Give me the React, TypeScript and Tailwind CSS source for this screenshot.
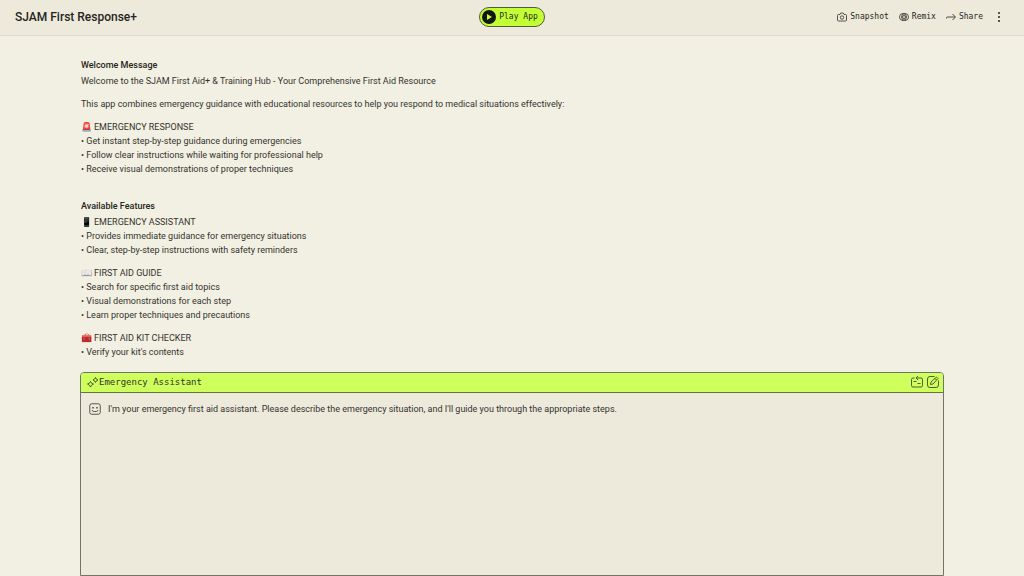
import type { ReactNode } from "react";

interface Block {
  icon?: string;
  lines: string[];
}

interface SectionProps {
  title: string;
  blocks: Block[];
}

const welcome: Block[] = [
  { lines: ["Welcome to the SJAM First Aid+ & Training Hub - Your Comprehensive First Aid Resource"] },
  {
    lines: [
      "This app combines emergency guidance with educational resources to help you respond to medical situations effectively:",
    ],
  },
  {
    icon: "🚨",
    lines: [
      "EMERGENCY RESPONSE",
      "• Get instant step-by-step guidance during emergencies",
      "• Follow clear instructions while waiting for professional help",
      "• Receive visual demonstrations of proper techniques",
    ],
  },
];

const features: Block[] = [
  {
    icon: "📱",
    lines: [
      "EMERGENCY ASSISTANT",
      "• Provides immediate guidance for emergency situations",
      "• Clear, step-by-step instructions with safety reminders",
    ],
  },
  {
    icon: "📖",
    lines: [
      "FIRST AID GUIDE",
      "• Search for specific first aid topics",
      "• Visual demonstrations for each step",
      "• Learn proper techniques and precautions",
    ],
  },
  {
    icon: "🧰",
    lines: ["FIRST AID KIT CHECKER", "• Verify your kit's contents"],
  },
];

function Section({ title, blocks }: SectionProps) {
  return (
    <section>
      <h2 className="mb-[2px] font-medium">{title}</h2>
      <div className="flex flex-col gap-[9px] text-[#33332d]">
        {blocks.map((block) => (
          <div key={block.lines[0]}>
            {block.lines.map((line, i) => (
              <p key={line} className="flex items-center">
                {i === 0 && block.icon && (
                  <span className="w-[13px] shrink-0 font-['Noto_Color_Emoji',sans-serif] text-[9px]">{block.icon}</span>
                )}
                {line}
              </p>
            ))}
          </div>
        ))}
      </div>
    </section>
  );
}

function ToolButton({ label, children }: { label: string; children: ReactNode }) {
  return (
    <button type="button" className="flex items-center gap-[3px]">
      {children}
      {label}
    </button>
  );
}

function CameraIcon() {
  return (
    <svg width="10" height="10" viewBox="0 0 20 20" fill="none" stroke="currentColor" strokeWidth="1.5">
      <path d="M3 5h3l1.500-3h5L14 5h3q2 0 2 2v9q0 2-2 2H3q-2 0-2-2V7q0-2 2-2z" strokeLinejoin="round" />
      <circle cx="10" cy="11" r="3.400" />
    </svg>
  );
}

function RemixIcon() {
  return (
    <svg width="10" height="10" viewBox="0 0 20 20" fill="none" stroke="currentColor" strokeWidth="1.5">
      <circle cx="8" cy="10" r="7" />
      <circle cx="12" cy="10" r="7" />
      <circle cx="10" cy="10" r="3" />
    </svg>
  );
}

function ArrowIcon() {
  return (
    <svg width="10" height="10" viewBox="0 0 20 20" fill="none" stroke="currentColor" strokeWidth="1.6">
      <path d="M1 13v-1q0-2 2-2h15M13 4l6 6-6 6" />
    </svg>
  );
}

function SparkleIcon() {
  return (
    <svg width="12" height="12" viewBox="0 0 24 24" fill="none" stroke="currentColor" strokeWidth="1.6" strokeLinejoin="round">
      <path d="M7 11q1 4 6 5-5 2-6 6-1-4-6-6 5-1 6-5z" />
      <path d="M17 3q1 4 5 5-4 1-5 5-1-4-5-5 4-1 5-5z" />
    </svg>
  );
}

function FaceIcon() {
  return (
    <svg
      width="12"
      height="12"
      viewBox="0 0 24 24"
      fill="none"
      stroke="currentColor"
      strokeWidth="1.6"
      className="mt-px shrink-0"
    >
      <rect x="1.500" y="1.500" width="21" height="21" rx="4" />
      <path d="M8 8v3M16 8v3" strokeWidth="2.600" />
      <path d="M6 14q1 3 3 3h6q2 0 3-3" />
    </svg>
  );
}

function ClearIcon() {
  return (
    <svg width="12" height="12" viewBox="0 0 24 24" fill="none" stroke="currentColor" strokeWidth="1.6" strokeLinejoin="round">
      <path d="M7 4H4Q1 4 1 7v12q0 3 3 3h16q3 0 3-3V7q0-3-3-3h-8" />
      <path d="M14 0l-4 4 4 4M5 11h6M13 15h6" />
    </svg>
  );
}

function EditIcon() {
  return (
    <svg width="12" height="12" viewBox="0 0 24 24" fill="none" stroke="currentColor" strokeWidth="1.6" strokeLinejoin="round">
      <path d="M15 1H6Q1 1 1 6v12q0 5 5 5h12q5 0 5-5V9" />
      <path d="M7 17l1-5L19 2l3 3-10 11zM16 5l3 3" />
    </svg>
  );
}

export default function App() {
  return (
    <div className="flex min-h-screen flex-col bg-[#f2f0e3] font-[Roboto,sans-serif] text-[9px] leading-[14px] text-[#252520]">
      <header className="grid h-9 grid-cols-[1fr_auto_1fr] items-center border-b border-[#dedbcd] bg-[#edeadc] px-[15px] pb-[2px]">
        <h1 className="text-[12px] font-medium">SJAM First Response+</h1>
        <button
          type="button"
          className="flex h-5 items-center gap-[3px] rounded-full border border-[#55593f] bg-[#c2ff33] pr-[6px] pl-[2px] font-['DejaVu_Sans_Mono',monospace] text-[8px]"
        >
          <svg width="14" height="14" viewBox="0 0 14 14">
            <circle cx="7" cy="7" r="7" fill="#141613" />
            <path d="M5 4l5 3-5 3z" fill="#c2ff33" />
          </svg>
          Play App
        </button>
        <div className="flex items-center justify-end gap-[10px] font-['DejaVu_Sans_Mono',monospace] text-[8px]">
          <ToolButton label="Snapshot">
            <CameraIcon />
          </ToolButton>
          <ToolButton label="Remix">
            <RemixIcon />
          </ToolButton>
          <ToolButton label="Share">
            <ArrowIcon />
          </ToolButton>
          <button type="button" aria-label="More" className="pr-2 pl-1">
            <svg width="4" height="12" viewBox="0 0 4 12" fill="currentColor">
              <circle cx="2" cy="2" r="1" />
              <circle cx="2" cy="6" r="1" />
              <circle cx="2" cy="10" r="1" />
            </svg>
          </button>
        </div>
      </header>

      <main className="flex flex-1 flex-col px-20 pt-[22px]">
        <div className="flex flex-col gap-[23px] px-px">
          <Section title="Welcome Message" blocks={welcome} />
          <Section title="Available Features" blocks={features} />
        </div>

        <section className="mt-[13px] flex flex-1 flex-col rounded-t-[4px] border border-[#73736b] bg-[#edeadc] text-[#33332d]">
          <div className="flex h-5 items-center rounded-t-[3px] border-b border-[#65753a] bg-[#cfff5c] pr-1 pb-px pl-[6px]">
            <SparkleIcon />
            <h2 className="font-['DejaVu_Sans_Mono',monospace] text-[9px]">Emergency Assistant</h2>
            <div className="ml-auto flex gap-1">
              <button type="button" aria-label="Clear chat">
                <ClearIcon />
              </button>
              <button type="button" aria-label="New message">
                <EditIcon />
              </button>
            </div>
          </div>
          <div className="flex gap-[7px] px-2 pt-[9px]">
            <FaceIcon />
            <p>
              I'm your emergency first aid assistant. Please describe the emergency situation, and I'll guide you
              through the appropriate steps.
            </p>
          </div>
        </section>
      </main>
    </div>
  );
}
